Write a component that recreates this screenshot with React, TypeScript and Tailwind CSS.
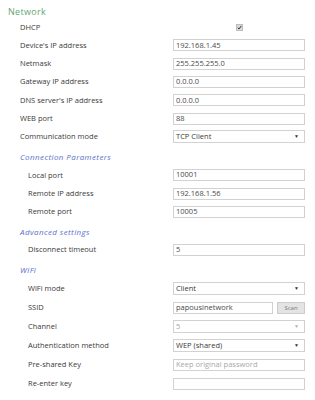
import React from 'react';

const font = { fontFamily: '"Open Sans", "Noto Sans", Arial, sans-serif' };

function Label({ text, indent }: { text: string; indent?: boolean }) {
  return (
    <div className={`${indent ? 'pl-[20px]' : 'pl-[12px]'} w-[165px] shrink-0 text-[7.5px] text-[#3a3a3a]`}>
      {text}
    </div>
  );
}

function TextBox({ value, placeholder, w = 'w-[132px]' }: { value?: string; placeholder?: string; w?: string }) {
  return (
    <div className={`${w} h-[12px] border border-[#d2d2d2] bg-white flex items-center px-[2px] text-[7.5px] leading-none`}>
      {value ? <span className="text-[#4a4a4a]">{value}</span> : <span className="text-[#a8a8a8]">{placeholder}</span>}
    </div>
  );
}

function Select({ value, disabled }: { value: string; disabled?: boolean }) {
  return (
    <div className="w-[132px] h-[13px] border border-[#d2d2d2] bg-white flex items-center justify-between px-[2px] text-[7.5px] leading-none">
      <span className={disabled ? 'text-[#a8a8a8]' : 'text-[#3a3a3a]'}>{value}</span>
      <span className={`text-[5px] mr-[3px] ${disabled ? 'text-[#b0b0b0]' : 'text-[#333]'}`}>▼</span>
    </div>
  );
}

function Row({ label, indent, h = 'h-[18.3px]', children }: { label: string; indent?: boolean; h?: string; children?: React.ReactNode }) {
  return (
    <div className={`flex items-center ${h}`}>
      <Label text={label} indent={indent} />
      <div className="flex items-center">{children}</div>
    </div>
  );
}

function SubHeading({ text }: { text: string }) {
  return (
    <div className="h-[20px] flex items-center pt-[2px] pl-[12px] text-[8px] italic tracking-[0.4px] text-[#5b70cc]">
      {text}
    </div>
  );
}

export default function App() {
  return (
    <div className="w-[315px] h-[400px] bg-white overflow-hidden pl-[8px] pt-[5px]" style={font}>
      <div className="h-[13px] flex items-center text-[9px] text-[#5fa672] tracking-[0.3px]">Network</div>
      <Row label="DHCP">
        <div className="w-[132px] flex justify-center">
          <div className="w-[7px] h-[7px] bg-[#d8d8d8] border border-[#bdbdbd] flex items-center justify-center">
            <svg width="5" height="5" viewBox="0 0 10 10">
              <path d="M1.5 5.5 L4 8 L8.5 2" fill="none" stroke="#333" strokeWidth="2" />
            </svg>
          </div>
        </div>
      </Row>
      <Row label="Device's IP address"><TextBox value="192.168.1.45" /></Row>
      <Row label="Netmask"><TextBox value="255.255.255.0" /></Row>
      <Row label="Gateway IP address"><TextBox value="0.0.0.0" /></Row>
      <Row label="DNS server's IP address"><TextBox value="0.0.0.0" /></Row>
      <Row label="WEB port"><TextBox value="88" /></Row>
      <Row label="Communication mode"><Select value="TCP Client" /></Row>

      <SubHeading text="Connection Parameters" />
      <Row label="Local port" indent><TextBox value="10001" /></Row>
      <Row label="Remote IP address" indent><TextBox value="192.168.1.56" /></Row>
      <Row label="Remote port" indent><TextBox value="10005" /></Row>

      <SubHeading text="Advanced settings" />
      <Row label="Disconnect timeout" indent><TextBox value="5" /></Row>

      <SubHeading text="WiFi" />
      <Row label="WiFi mode" indent h="h-[19px]"><Select value="Client" /></Row>
      <Row label="SSID" indent h="h-[19px]">
        <div className="flex items-center gap-[4px]">
          <TextBox value="papousinetwork" w="w-[100px]" />
          <div className="w-[28px] h-[12px] bg-[#e4e4e4] border border-[#cccccc] flex items-center justify-center text-[6px] text-[#777] leading-none">
            Scan
          </div>
        </div>
      </Row>
      <Row label="Channel" indent h="h-[19px]"><Select value="5" disabled /></Row>
      <Row label="Authentication method" indent h="h-[19px]"><Select value="WEP (shared)" /></Row>
      <Row label="Pre-shared Key" indent h="h-[19px]"><TextBox placeholder="Keep original password" /></Row>
      <Row label="Re-enter key" indent h="h-[19px]"><TextBox /></Row>
    </div>
  );
}
